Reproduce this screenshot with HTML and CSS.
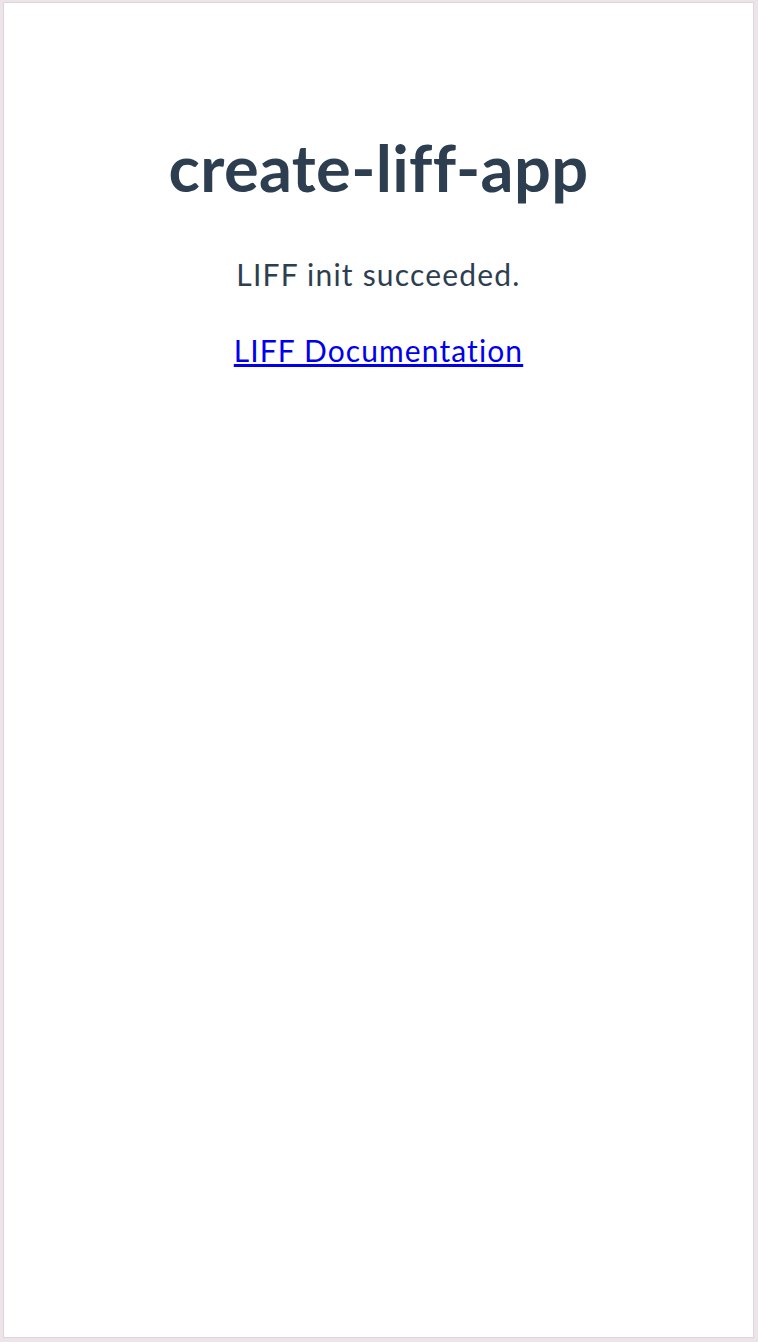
FILE: index.html
```html
<!DOCTYPE html>
<html lang="en">
<head>
<meta charset="utf-8">
<title>create-liff-app</title>
<link rel="stylesheet" href="styles.css">
</head>
<body>
<div class="frame">
  <main class="app">
    <h1 class="title">create-liff-app</h1>
    <p class="status">LIFF init succeeded.</p>
    <a class="doc-link" href="#">LIFF Documentation</a>
  </main>
</div>
</body>
</html>
```
FILE: styles.css
```css
html, body {
  margin: 0;
  padding: 0;
  height: 100%;
}
body {
  background: #ece4e9;
  padding: 2px 4px 4px 3px;
  box-sizing: border-box;
}
.frame {
  height: 100%;
  background: #ffffff;
  border: 1px solid #dcd6da;
  box-sizing: border-box;
}
.app {
  display: flex;
  flex-direction: column;
  align-items: center;
  padding-top: 124px;
  font-family: Lato, "Noto Sans", sans-serif;
  color: #2c3e50;
  font-variant-ligatures: none;
}
.title {
  margin: 0;
  font-size: 65px;
  font-weight: 700;
  line-height: 80px;
  letter-spacing: 0.35px;
}
.status {
  margin: 49px 0 0;
  font-size: 30px;
  line-height: 36px;
  letter-spacing: 1.2px;
}
.doc-link {
  margin-top: 40px;
  font-size: 30px;
  line-height: 36px;
  letter-spacing: 1.1px;
  color: #0000ee;
  text-decoration: underline;
}
```
